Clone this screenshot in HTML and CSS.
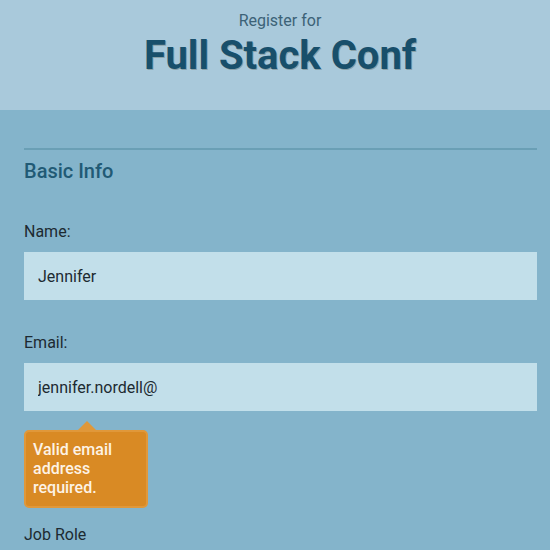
FILE: index.html
```html
<!DOCTYPE html>
<html lang="en">
<head>
    <meta charset="UTF-8">
    <meta name="viewport" content="width=device-width, initial-scale=1.0">
    <title>Register for Full Stack Conf</title>
    <link rel="stylesheet" href="styles.css">
</head>
<body>
    <header class="header">
        <span class="header-sub">Register for</span>
        <h1>Full Stack Conf</h1>
    </header>
    <form class="container">
        <div class="section">
            <h2>Basic Info</h2>

            <label for="name" class="first">Name:</label>
            <input type="text" id="name" value="Jennifer">

            <label for="mail">Email:</label>
            <input type="text" id="mail" value="jennifer.nordell@">
            <div class="tooltip">Valid email address required.</div>

            <label class="plain">Job Role</label>
        </div>
    </form>
</body>
</html>
```

FILE: styles.css
```css
body {
    margin: 0;
    background-color: #84b4cb;
    color: #1d2a31;
    font-family: Roboto, "Liberation Sans", sans-serif;
}
.header {
    background-color: #a9c9db;
    text-align: center;
    height: 110px;
    padding: 11px 0 0 10px;
    box-sizing: border-box;
}
.header-sub {
    display: block;
    font-size: 16px;
    color: #3c6277;
    line-height: 20px;
}
.header h1 {
    margin: 0;
    margin-top: 3px;
    font-size: 40px;
    line-height: 44px;
    font-weight: 700;
    color: #184f6b;
    text-shadow: 1px 1px 0 rgba(60, 60, 40, 0.3);
}
.container {
    padding: 38px 13px 0 24px;
}
.section {
    border-top: 2px solid #6a9fb5;
}
.section h2 {
    font-size: 20px;
    font-weight: 500;
    color: #215a75;
    margin: 9px 0 0;
    line-height: 24px;
}
label {
    display: block;
    font-size: 16px;
    line-height: 18px;
    margin-top: 34px;
    margin-bottom: 11px;
}
label.first {
    margin-top: 40px;
}
label.plain {
    margin-top: 18px;
}
input[type="text"] {
    display: block;
    width: 100%;
    box-sizing: border-box;
    height: 48px;
    border: none;
    background-color: #c2dfea;
    padding: 0 14px;
    font-family: Roboto, "Liberation Sans", sans-serif;
    font-size: 16px;
    color: #1d2a31;
    margin: 0;
}
.tooltip {
    position: relative;
    width: 124px;
    box-sizing: border-box;
    margin-top: 19px;
    padding: 8px 8px 9px 7px;
    background-color: #d98a24;
    border: 2px solid #e0983a;
    border-radius: 5px;
    color: #fdf3e6;
    font-size: 16px;
    font-weight: 500;
    line-height: 19px;
}
.tooltip::before {
    content: "";
    position: absolute;
    top: -11px;
    left: 52px;
    border-left: 9px solid transparent;
    border-right: 9px solid transparent;
    border-bottom: 9px solid #e0983a;
}
```
